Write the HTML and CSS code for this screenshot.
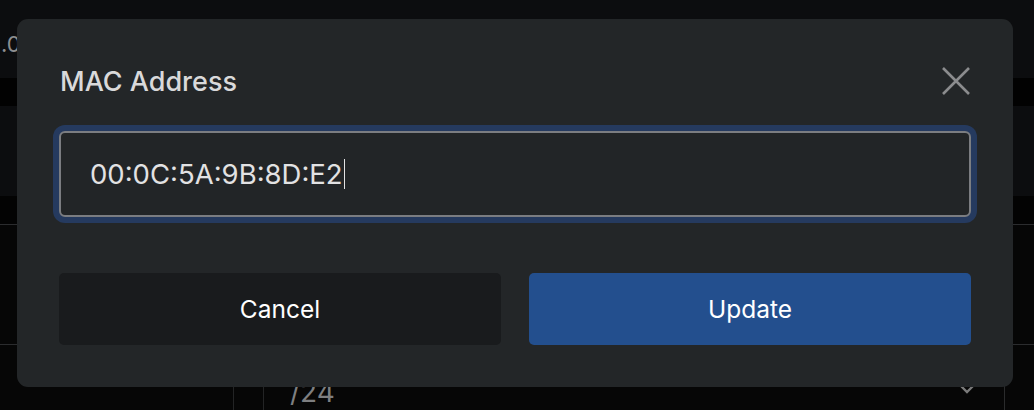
FILE: index.html
```html
<!DOCTYPE html>
<html>
<head>
<meta charset="utf-8">
<link rel="stylesheet" href="styles.css">
</head>
<body>
<div class="page">
  <div class="row row-a"><span class="ip">.0</span></div>
  <div class="row row-b"></div>
  <div class="row row-c"></div>
  <div class="row row-d"></div>
  <div class="row row-e"></div>
  <div class="row row-f">
    <div class="cell c1"></div>
    <div class="cell c2"></div>
    <div class="cell c3"><span class="mask">/24</span>
      <svg class="chev" width="16" height="10" viewBox="0 0 16 10"><path d="M2 2 L8 8 L14 2" fill="none" stroke="#7a7a7a" stroke-width="2.4"/></svg>
    </div>
    <div class="cell c4"></div>
  </div>
</div>

<div class="modal">
  <div class="modal-head">
    <h2 class="title">MAC Address</h2>
    <button class="close" aria-label="Close">
      <svg width="30" height="30" viewBox="0 0 30 30"><path d="M2 2 L28 28 M28 2 L2 28" stroke="#8b8c8e" stroke-width="2.6" fill="none"/></svg>
    </button>
  </div>
  <div class="field">
    <div class="input">00:0C:5A:9B:8D:E2<span class="caret"></span></div>
  </div>
  <div class="actions">
    <button class="btn btn-cancel">Cancel</button>
    <button class="btn btn-update">Update</button>
  </div>
</div>
</body>
</html>
```

FILE: styles.css
```css
* { box-sizing: border-box; }
html, body { margin: 0; padding: 0; }
body {
  width: 1034px;
  height: 410px;
  overflow: hidden;
  background: #060606;
  font-family: "Inter", "Noto Sans", sans-serif;
  position: relative;
}
.page { display: flex; flex-direction: column; }
.row { width: 100%; }
.row-a { height: 78px; background: #0c0d0f; display: flex; align-items: center; }
.ip { font-size: 22px; color: #8d8e90; margin-left: 1px; margin-top: 10px; white-space: nowrap; }
.row-b { height: 28px; background: #020202; }
.row-c { height: 90px; background: #0c0d0f; }
.row-d { height: 29px; background: #030303; border-bottom: 1px solid #2b2c2e; }
.row-e { height: 120px; background: #060606; border-bottom: 1px solid #2b2c2e; }
.row-f { height: 80px; display: flex; background: #060606; }
.cell { height: 100%; }
.c1 { width: 234px; border-right: 1px solid #232425; }
.c2 { width: 30px; border-right: 1px solid #232425; }
.c3 { width: 741px; border-right: 1px solid #2a2b2c; position: relative; padding-left: 26px; padding-top: 30px; }
.mask { font-size: 28px; color: #7d7e80; }
.chev { position: absolute; left: 695px; top: 39px; }
.c4 { flex: 1; }

.modal {
  position: absolute;
  left: 17px;
  top: 19px;
  width: 996px;
  height: 368px;
  background: #232628;
  border-radius: 11px;
  padding: 0 42px;
  display: flex;
  flex-direction: column;
}
.modal-head {
  display: flex;
  align-items: flex-start;
  justify-content: space-between;
  height: 112px;
  padding-top: 46px;
}
.title {
  margin: 0;
  font-size: 27px;
  line-height: 33px;
  font-weight: 500;
  color: #d9d9da;
  padding-left: 1px;
}
.close {
  background: none;
  border: 0;
  padding: 0;
  width: 30px;
  height: 30px;
  margin-top: 1px;
  display: flex;
}
.input {
  height: 86px;
  border: 2px solid #7b7d81;
  border-radius: 6px;
  box-shadow: 0 0 0 6px #253a5f;
  background: #222527;
  color: #e2e2e3;
  font-size: 27.5px;
  display: flex;
  align-items: center;
  padding-left: 29px;
}
.caret {
  display: inline-block;
  width: 1.5px;
  height: 30px;
  background: #e2e2e3;
  margin-left: 1px;
}
.actions {
  display: flex;
  gap: 28px;
  margin-top: 56px;
}
.btn {
  flex: 1;
  height: 72px;
  border: 0;
  border-radius: 5px;
  font-family: inherit;
  font-size: 24.5px;
  font-weight: 400;
  color: #ffffff;
}
.btn-cancel { background: #191b1d; }
.btn-update { background: #234f8e; }
```
